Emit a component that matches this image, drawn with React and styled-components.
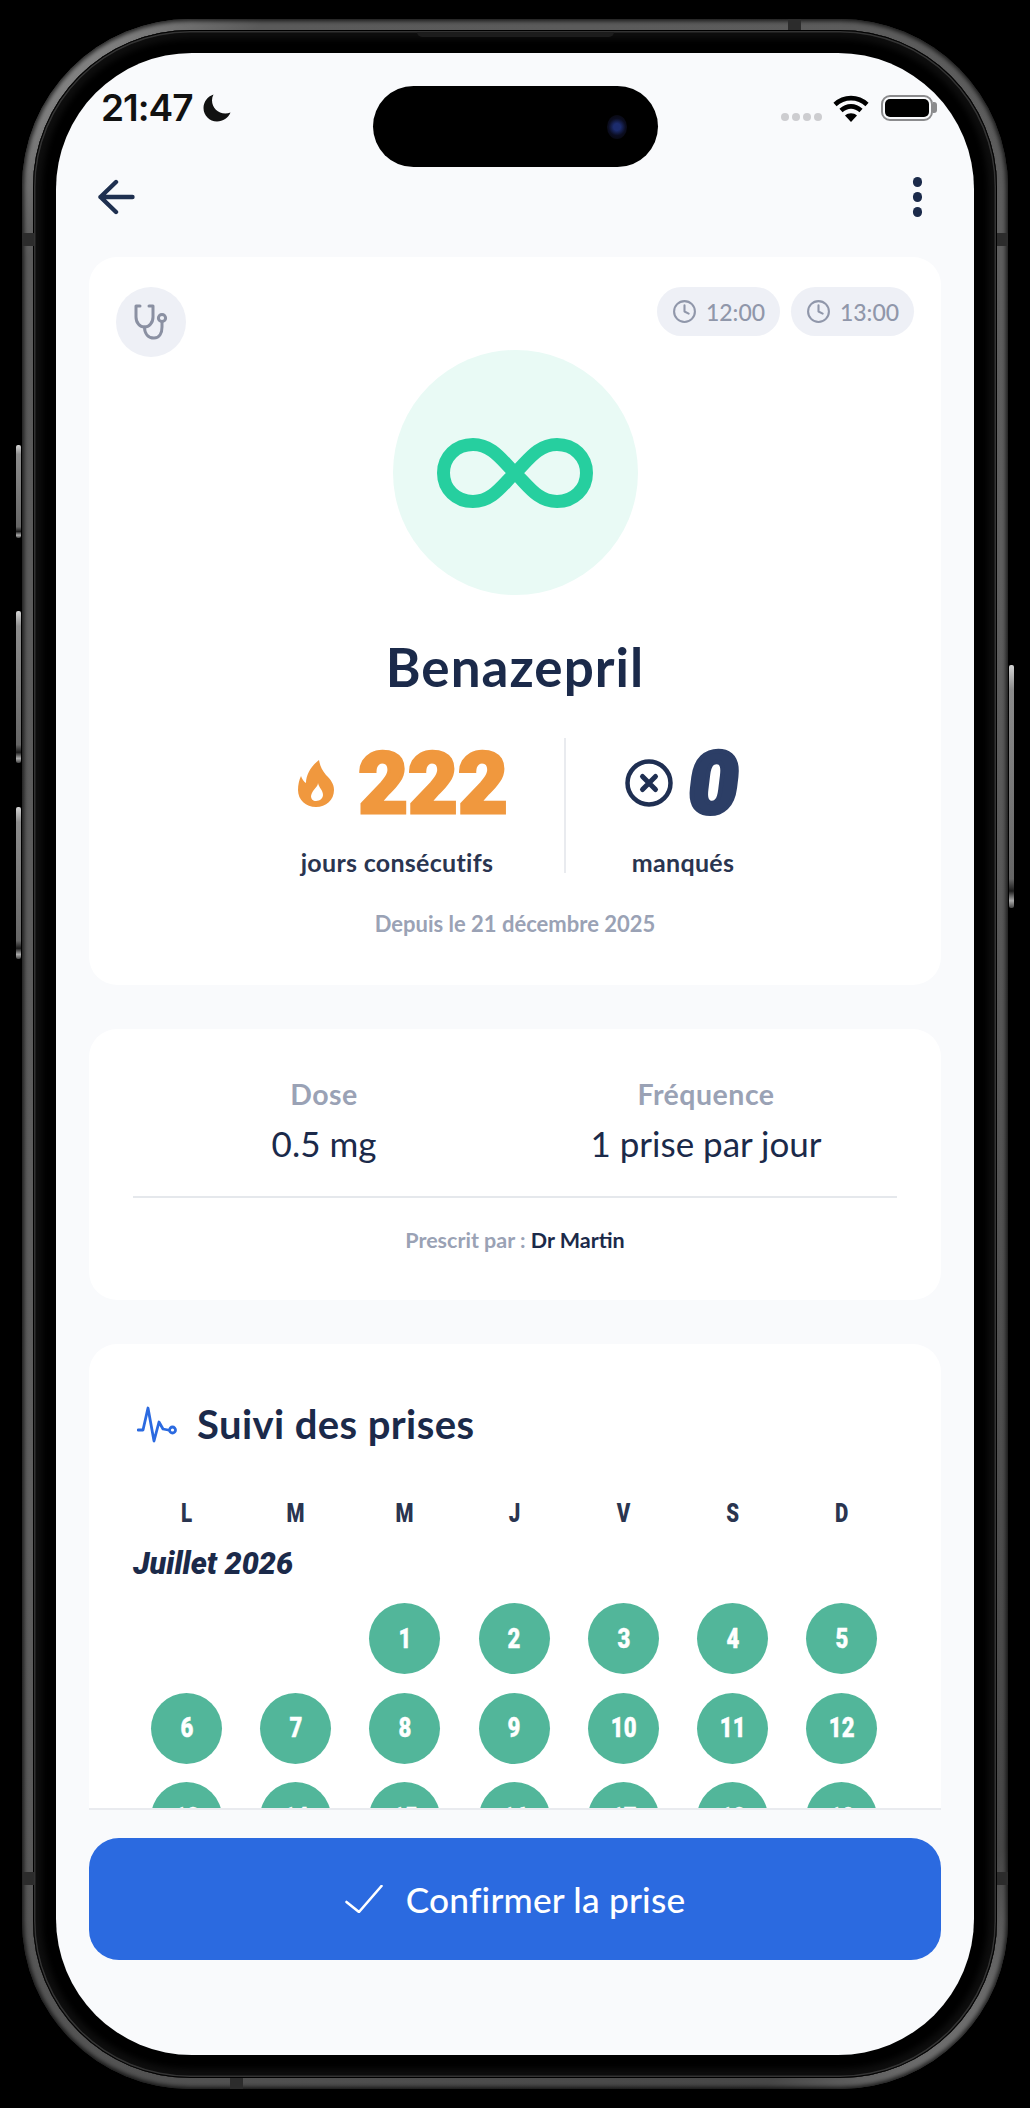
import React from 'react';
import styled, { createGlobalStyle } from 'styled-components';
import { Clock } from 'lucide-react';

const Global = createGlobalStyle`
  html, body { margin: 0; padding: 0; background: #000; height: 2108px; overflow: hidden; }
  * { box-sizing: border-box; }
  body { font-family: "Lato", "Noto Sans", sans-serif; }
`;
const Page = styled.div`
  width: 1030px; height: 2108px; background: #000; padding: 19px 22px; position: relative; overflow: hidden;
`;
const SideButton = styled.div`
  position: absolute; width: 5px; top: ${p => p.$top}px; height: ${p => p.$h}px;
  ${p => p.$right ? 'left: 1009px;' : 'left: 16px;'}
  border-radius: 2px;
  background: linear-gradient(#d4d4d4 0, #8c8c8c 10%, #666 88%, #1a1a1a 93%, #aaa 97%, #444 100%);
`;
const AntennaBand = styled.div`
  position: absolute; background: #2c2c2c; left: ${p => p.$x}px; top: ${p => p.$y}px; width: ${p => p.$w}px; height: ${p => p.$h}px;
`;
const Sliver = styled.div`
  position: absolute; left: 417px; top: 32px; width: 197px; height: 5px; background: #1c1c1c; border-radius: 0 0 6px 6px;
`;
const Frame = styled.div`
  width: 986px; height: 2070px; border-radius: 168px; padding: 11px;
  background: linear-gradient(135deg, #a0a0a0 0, #5a5a5a 8%, #5e5e5e 50%, #474747 92%, #8c8c8c 100%);
  box-shadow: inset 0 0 4px 2px rgba(0, 0, 0, 0.75);
`;
const Bezel = styled.div`
  width: 100%; height: 100%; border-radius: 157px; padding: 23px; background: #000;
  box-shadow: inset 0 0 0 1px #000, inset 0 0 0 2.5px #333, inset 0 0 6px 9px #0e0e0e;
`;
const Screen = styled.div`
  position: relative; width: 100%; height: 100%; border-radius: 136px; background: #f9fafc; overflow: hidden;
  display: flex; flex-direction: column;
`;
const Island = styled.div`
  position: absolute; left: 317px; top: 33px; width: 285px; height: 81px; border-radius: 41px; background: #000;
`;
const Lens = styled.div`
  position: absolute; left: 234px; top: 29px; width: 20px; height: 24px; border-radius: 50%;
  background: radial-gradient(circle, #1c2c6e 0 22%, #0b0d20 55%, #050507 100%);
`;
const StatusBar = styled.div`
  height: 112px; flex: none; padding: 40px 41px 0 45px; display: flex; justify-content: space-between; align-items: flex-start;
`;
const StatusLeft = styled.div`display: flex; align-items: center; gap: 10px; height: 30px;`;
const StatusTime = styled.span`
  font-family: "Inter", sans-serif; font-weight: 600; font-size: 37px; line-height: 30px; color: #111; letter-spacing: -1px;
`;
const StatusRight = styled.div`display: flex; align-items: center; height: 30px;`;
const SignalDots = styled.div`display: flex; gap: 3px; margin: 18px 11px 0 0;`;
const SignalDot = styled.span`width: 8px; height: 8px; border-radius: 50%; background: #cdcdd0;`;
const Battery = styled.div`
  width: 52px; height: 26px; margin-left: 12px; border: 2.5px solid #8b8b8d; border-radius: 9px; padding: 2px; position: relative;
`;
const BatteryFill = styled.div`width: 100%; height: 100%; background: #000; border-radius: 5px;`;
const BatteryNub = styled.div`
  position: absolute; left: 50px; top: 5px; width: 4px; height: 11px; background: #8b8b8d; border-radius: 0 3px 3px 0;
`;
const Header = styled.div`
  height: 64px; flex: none; padding: 0 52px 0 41px; display: flex; justify-content: space-between; align-items: center;
`;
const Dots = styled.div`display: flex; flex-direction: column; gap: 5.5px;`;
const Dot = styled.span`width: 9.5px; height: 9.5px; border-radius: 50%; background: #1b2a4a;`;
const Scroller = styled.div`
  flex: 1; min-height: 0; margin: 28px 33px 0; overflow: hidden; border-bottom: 2px solid #e9ebef;
  display: flex; flex-direction: column; gap: 44px;
`;
const HeroCard = styled.section`
  flex: none; background: #fff; border-radius: 28px; padding: 30px 27px 46px;
`;
const DetailCard = styled.section`
  flex: none; height: 271px; background: #fff; border-radius: 28px; padding: 47px 44px 0;
`;
const TrackCard = styled.section`
  flex: none; height: 600px; background: #fff; border-radius: 28px; padding: 55px 45px 0 43px;
`;
const TopRow = styled.div`display: flex; justify-content: space-between; align-items: flex-start; height: 63px;`;
const Badge = styled.div`
  width: 70px; height: 70px; border-radius: 50%; background: #eef0f6; display: flex; align-items: center; justify-content: center;
`;
const Pills = styled.div`display: flex; gap: 11px;`;
const Pill = styled.div`
  height: 49px; width: 123px; border-radius: 25px; background: #eef0f6; color: #9097aa; display: flex; align-items: center; justify-content: center; gap: 9px;
  font-size: 23px; font-weight: 500;
`;
const Avatar = styled.div`
  width: 245px; height: 245px; border-radius: 50%; margin: 0 auto; background: #e9faf5; display: flex; align-items: center; justify-content: center;
`;
const Title = styled.h1`
  margin: 42px 0 0; font-size: 53px; letter-spacing: 1px; line-height: 60px; font-weight: 700; color: #1b2a4a; text-align: center;
`;
const Stats = styled.div`display: flex; justify-content: center; margin-top: 41px;`;
const Stat = styled.div`
  width: ${p => p.$w}px; display: flex; flex-direction: column; align-items: center;
`;
const ValueRow = styled.div`display: flex; align-items: center; height: 90px; gap: ${p => p.$gap}px; margin-left: ${p => p.$shift || 0}px;`;
const BigNum = styled.span`
  display: inline-block; font-family: "Roboto", sans-serif; font-weight: 900; font-size: 86px; line-height: 90px; color: ${p => p.$color};
  transform: translateY(1px) skewX(${p => p.$skew || 0}deg);
  -webkit-text-stroke: ${p => p.$stroke}px ${p => p.$color};
`;
const StatLabel = styled.div`
  margin-top: 19px; font-size: 25px; letter-spacing: 0.3px; line-height: 30px; font-weight: 700; color: #2a3550;
`;
const VRule = styled.div`width: 2px; height: 135px; background: #e9ebef; flex: none; margin: 0 -1px;`;
const Since = styled.div`
  margin-top: 32px; text-align: center; font-size: 22px; line-height: 30px; font-weight: 700; color: #9aa2b5;
`;
const Infos = styled.div`display: grid; grid-template-columns: 382px 382px;`;
const Info = styled.div`text-align: center;`;
const InfoLabel = styled.div`font-size: 28.5px; letter-spacing: 0.5px; line-height: 36px; font-weight: 700; color: #9aa2b5;`;
const InfoValue = styled.div`margin-top: 11px; font-size: 35px; line-height: 40px; font-weight: 400; color: #1b2a4a;`;
const HRule = styled.div`height: 2px; background: #e5e8ec; margin-top: 33px;`;
const Prescribed = styled.div`margin-top: 27px; text-align: center; font-size: 21.5px; line-height: 30px; font-weight: 700; color: #9aa2b5;`;
const Doctor = styled.span`color: #1b2a4a;`;
const TrackTitle = styled.div`display: flex; align-items: center; gap: 20px; padding-left: 5px;`;
const TrackHeading = styled.h2`margin: 0; font-size: 40px; letter-spacing: 0.4px; line-height: 50px; font-weight: 700; color: #1b2a4a;`;
const Week = styled.div`display: grid; grid-template-columns: repeat(7, 109.2px); margin-top: 50px;`;
const WeekDay = styled.div`
  font-family: "Roboto", sans-serif; font-weight: 900; font-size: 25px; line-height: 30px; text-align: center; color: #2a3550;
  transform: scaleX(0.82);
`;
const Month = styled.div`
  margin: 20px 0 0 1px; font-family: "Roboto", sans-serif; font-weight: 900; font-style: italic; font-size: 30.5px; line-height: 30px; color: #1b2a4a;
`;
const Days = styled.div`display: grid; grid-template-columns: repeat(7, 109.2px); grid-auto-rows: 89.5px; margin-top: 24px;`;
const DayCell = styled.div`display: flex; justify-content: center;`;
const DayCircle = styled.div`
  width: 71px; height: 71px; border-radius: 50%; background: #52b69a; display: flex; align-items: center; justify-content: center;
`;
const DayNumber = styled.span`
  display: inline-block; color: #fff; font-family: "Roboto", sans-serif; font-weight: 900; font-size: 27px; transform: scaleX(0.82);
  -webkit-text-stroke: 0.4px #fff;
`;
const Footer = styled.div`flex: none; height: 245px; padding: 28px 33px 0;`;
const Confirm = styled.button`
  width: 100%; height: 122px; border: 0; border-radius: 30px; background: #2b6ae0; color: #fff; display: flex; align-items: center; justify-content: center; gap: 23px;
  font-family: inherit; font-size: 35.3px; letter-spacing: 0.2px; font-weight: 500;
`;

const Moon = () => (
  <svg width="30" height="30" viewBox="0 0 30 30"><path d="M11.5 1.5C5.5 3.5 1.5 9 1.5 15c0 7.5 6 13.5 13.5 13.5 6 0 11.2-3.6 13.5-9-1.6.7-3.4 1-5.2 1C16 20.5 10 14.6 10 7.2c0-2 .5-3.9 1.5-5.7z" fill="#111"/></svg>
);
const Wifi = () => (
  <svg width="36" height="27" viewBox="0 0 36 27" fill="none" stroke="#000" strokeWidth="4.6"><path d="M2 9.5C11 1 25 1 34 9.5"/><path d="M8 15.5c6-5.5 14-5.5 20 0"/><path d="M18 27l-6-6.4c3.4-3 8.6-3 12 0z" fill="#000" stroke="none"/></svg>
);
const BackArrow = () => (
  <svg width="38" height="36" viewBox="0 0 38 36" fill="none" stroke="#1f3050" strokeWidth="4.4" strokeLinecap="round" strokeLinejoin="round"><path d="M3.500 18h32M19 3L3.500 18 19 33"/></svg>
);
const StethoscopeIcon = () => (
  <svg width="34" height="36" viewBox="0 0 34 36" fill="none" stroke="#8a90a2" strokeWidth="3" strokeLinecap="round" strokeLinejoin="round">
    <path d="M6 2H2v11c0 6 4 10 8.500 10S19 19 19 13V2h-4"/>
    <path d="M10.500 23c0 7 4 11 9.500 11s8-5 8-11v-5"/>
    <circle cx="28" cy="14" r="3.600"/>
  </svg>
);
const InfinityMark = () => (
  <svg width="156" height="70" viewBox="0 0 156 70" fill="none" stroke="#26cf9f" strokeWidth="13" strokeLinejoin="round"><path d="M78 35C66 24 56 6.500 36 6.500 19 6.500 6.500 19 6.500 35S19 63.500 36 63.500C56 63.500 66 46 78 35S100 6.500 120 6.500C137 6.500 149.500 19 149.500 35S137 63.500 120 63.500C100 63.500 90 46 78 35Z"/></svg>
);
const Flame = () => (
  <svg width="36" height="47" viewBox="0 0 36 47"><path fillRule="evenodd" fill="#f0983e" d="M21 0C22 6 24 10 28 15C33 20 36 24 36 30C36 40 28 47 18 47C8 47 0 40 0 30C0 25 1 20 3 16C4 19 6 22 8 23C8 15 13 6 21 0ZM20 23C20 27 14 30 13 36C13 39 15 41 18 41C22 41 25 38 25 35C25 30 21 28 20 23Z"/></svg>
);
const CrossCircle = () => (
  <svg width="48" height="48" viewBox="0 0 48 48" fill="none" stroke="#1f2f52" strokeWidth="4.5" strokeLinecap="round"><circle cx="24" cy="24" r="21.500"/><path d="M17.500 17.500l13 13M30.500 17.500l-13 13" strokeWidth="5"/></svg>
);
const Pulse = () => (
  <svg width="40" height="37" viewBox="0 0 40 37" fill="none" stroke="#2b6ae0" strokeWidth="2.8" strokeLinecap="round" strokeLinejoin="round"><path d="M1 24h5L11 2l6 33 5-19 4 7 5 1"/><circle cx="35.500" cy="24" r="3"/></svg>
);
const CheckMark = () => (
  <svg width="38" height="28" viewBox="0 0 38 28" fill="none" stroke="#fff" strokeWidth="2.6" strokeLinecap="round" strokeLinejoin="round"><path d="M1.500 17L14 27 36.500 1"/></svg>
);

const rows = [[null,null,1,2,3,4,5],[6,7,8,9,10,11,12],[13,14,15,16,17,18,19]];

export default function App() {
  return (
    <Page>
      <Global />
      <SideButton $top={445} $h={93} />
      <SideButton $top={611} $h={152} />
      <SideButton $top={807} $h={152} />
      <SideButton $right $top={665} $h={243} />
      <Frame>
        <Bezel>
          <Screen>
            <Island><Lens /></Island>
            <StatusBar>
              <StatusLeft><StatusTime>21:47</StatusTime><Moon /></StatusLeft>
              <StatusRight>
                <SignalDots><SignalDot /><SignalDot /><SignalDot /><SignalDot /></SignalDots>
                <Wifi />
                <Battery><BatteryFill /><BatteryNub /></Battery>
              </StatusRight>
            </StatusBar>
            <Header>
              <BackArrow />
              <Dots><Dot /><Dot /><Dot /></Dots>
            </Header>
            <Scroller>
              <HeroCard>
                <TopRow>
                  <Badge><StethoscopeIcon /></Badge>
                  <Pills>
                    <Pill><Clock size={25} strokeWidth={2} />12:00</Pill>
                    <Pill><Clock size={25} strokeWidth={2} />13:00</Pill>
                  </Pills>
                </TopRow>
                <Avatar><InfinityMark /></Avatar>
                <Title>Benazepril</Title>
                <Stats>
                  <Stat $w={336}>
                    <ValueRow $gap={24} $shift={12}><Flame /><BigNum $color="#f0983e" $stroke={3}>222</BigNum></ValueRow>
                    <StatLabel>jours consécutifs</StatLabel>
                  </Stat>
                  <VRule />
                  <Stat $w={236}>
                    <ValueRow $gap={16} $shift={-2}><CrossCircle /><BigNum $color="#2c3e66" $stroke={4.5} $skew={-7}>0</BigNum></ValueRow>
                    <StatLabel>manqués</StatLabel>
                  </Stat>
                </Stats>
                <Since>Depuis le 21 décembre 2025</Since>
              </HeroCard>
              <DetailCard>
                <Infos>
                  <Info><InfoLabel>Dose</InfoLabel><InfoValue>0.5 mg</InfoValue></Info>
                  <Info><InfoLabel>Fréquence</InfoLabel><InfoValue>1 prise par jour</InfoValue></Info>
                </Infos>
                <HRule />
                <Prescribed>Prescrit par : <Doctor>Dr Martin</Doctor></Prescribed>
              </DetailCard>
              <TrackCard>
                <TrackTitle><Pulse /><TrackHeading>Suivi des prises</TrackHeading></TrackTitle>
                <Week>{['L','M','M','J','V','S','D'].map((d,i) => <WeekDay key={i}>{d}</WeekDay>)}</Week>
                <Month>Juillet 2026</Month>
                <Days>
                  {rows.flat().map((d,i) => <DayCell key={i}>{d && <DayCircle><DayNumber>{d}</DayNumber></DayCircle>}</DayCell>)}
                </Days>
              </TrackCard>
            </Scroller>
            <Footer>
              <Confirm><CheckMark />Confirmer la prise</Confirm>
            </Footer>
          </Screen>
        </Bezel>
      </Frame>
      <Sliver />
      <AntennaBand $x={788} $y={19} $w={13} $h={11} />
      <AntennaBand $x={230} $y={2078} $w={13} $h={11} />
      <AntennaBand $x={23} $y={233} $w={11} $h={13} />
      <AntennaBand $x={997} $y={233} $w={11} $h={13} />
      <AntennaBand $x={23} $y={1872} $w={11} $h={13} />
      <AntennaBand $x={997} $y={1872} $w={11} $h={13} />
    </Page>
  );
}
